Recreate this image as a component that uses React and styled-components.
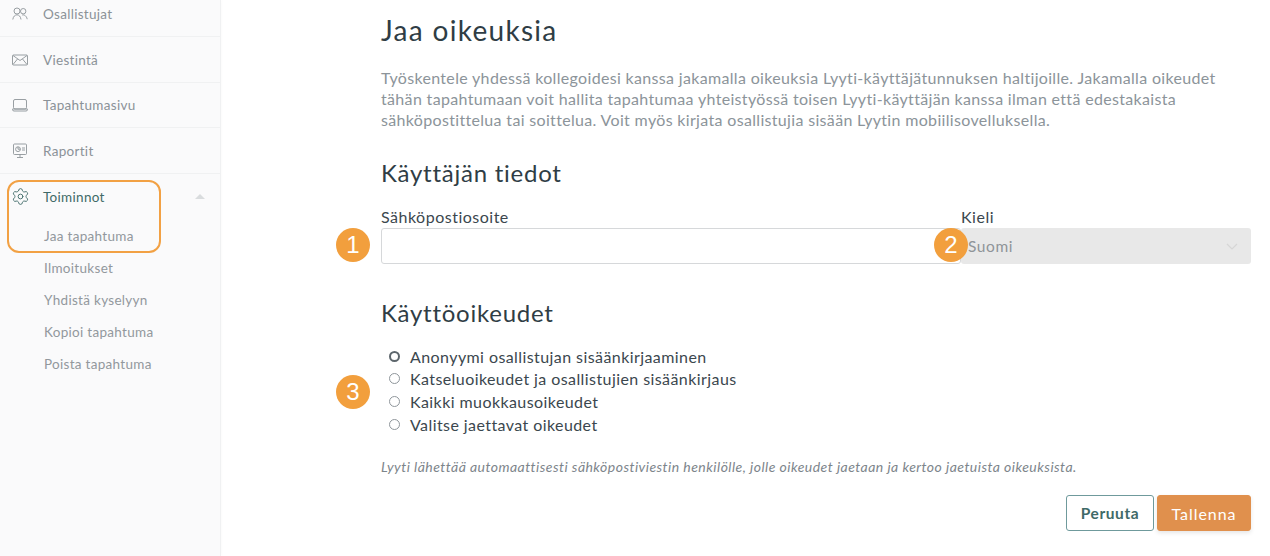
import React from 'react';
import styled, { createGlobalStyle } from 'styled-components';
import { Settings } from 'lucide-react';

const GlobalStyle = createGlobalStyle`
  html, body {
    margin: 0;
    padding: 0;
    height: 100%;
    background: #fff;
    overflow: hidden;
  }
  body {
    font-family: Lato, "Open Sans", sans-serif;
    color: #2f3d45;
  }
`;

const Page = styled.div`
  display: flex;
  width: 1270px;
  height: 556px;
  overflow: hidden;
`;

const Sidebar = styled.aside`
  position: relative;
  box-sizing: border-box;
  width: 221px;
  flex: none;
  background: #fafafb;
  border-right: 1px solid #f0f1f2;
  box-shadow: 1px 0 3px rgba(0, 0, 0, 0.02);
`;

const NavRow = styled.div`
  display: flex;
  align-items: center;
  box-sizing: border-box;
  height: ${(p) => p.$height}px;
  padding-left: 12px;
  padding-bottom: ${(p) => p.$bottom || 0}px;
  border-bottom: 1px solid ${(p) => (p.$open ? 'transparent' : '#f0f1f2')};
  color: ${(p) => (p.$open ? '#3f6a68' : '#8b9298')};
  font-size: 13.5px;
  letter-spacing: 0.3px;
`;

const IconSlot = styled.span`
  display: flex;
  align-items: center;
  justify-content: center;
  width: 16px;
  height: 16px;
  margin-right: 15px;
  color: ${(p) => (p.$open ? '#47706e' : '#8d9499')};

  svg {
    flex: none;
  }
`;

const Caret = styled.span`
  width: 0;
  height: 0;
  margin-left: auto;
  margin-right: 15px;
  border-left: 5px solid transparent;
  border-right: 5px solid transparent;
  border-bottom: 5px solid #d9dcde;
`;

const SubList = styled.div`
  display: flex;
  flex-direction: column;
`;

const SubItem = styled.div`
  height: 32px;
  line-height: 32px;
  padding-left: 44px;
  color: #92989d;
  font-size: 13.5px;
  letter-spacing: 0.3px;
`;

const Highlight = styled.div`
  position: absolute;
  left: 7px;
  top: 180px;
  width: 154px;
  height: 73px;
  box-sizing: border-box;
  border: 2px solid #f2a144;
  border-radius: 12px;
`;

const Main = styled.main`
  flex: 1;
  padding: 12px 19px 0 160px;
`;

const Title = styled.h1`
  margin: 0;
  font-size: 28px;
  line-height: 36px;
  font-weight: 400;
  letter-spacing: 1.3px;
  color: #2f3d45;
`;

const Intro = styled.p`
  margin: 19px 0 0;
  font-size: 16px;
  line-height: 21px;
  letter-spacing: 0.33px;
  color: #8c949a;
`;

const Heading = styled.h2`
  margin: ${(p) => p.$top}px 0 0;
  font-size: 24px;
  line-height: 32px;
  font-weight: 400;
  letter-spacing: 0.75px;
  color: #2f3d45;
`;

const FormRow = styled.div`
  position: relative;
  display: grid;
  grid-template-columns: 580px 290px;
  margin-top: 17px;
`;

const Field = styled.div`
  display: flex;
  flex-direction: column;
`;

const Label = styled.label`
  font-size: 16px;
  line-height: 22px;
  letter-spacing: 0.5px;
  color: #3b474e;
`;

const TextInput = styled.input`
  box-sizing: border-box;
  height: 36px;
  border: 1px solid #d6d8da;
  border-radius: 3px;
  background: #fff;
  outline: none;
`;

const SelectBox = styled.div`
  display: flex;
  align-items: center;
  justify-content: space-between;
  box-sizing: border-box;
  height: 36px;
  padding: 0 13px 0 7px;
  border-radius: 3px;
  background: #e8e8e8;
  color: #8f9498;
  font-size: 15.5px;
  letter-spacing: 0.6px;
`;

const Badge = styled.span`
  position: absolute;
  left: ${(p) => p.$left}px;
  top: ${(p) => p.$top}px;
  display: flex;
  align-items: center;
  justify-content: center;
  width: 34px;
  height: 34px;
  border-radius: 50%;
  background: #f29f3d;
  color: #fff;
  font-family: "Liberation Sans", Arial, sans-serif;
  font-size: 24px;
`;

const RadioGroup = styled.div`
  position: relative;
  display: flex;
  flex-direction: column;
  margin-top: 16px;
`;

const RadioRow = styled.div`
  display: flex;
  align-items: center;
  height: 22.6px;
  padding-left: 8px;
  font-size: 16px;
  letter-spacing: 0.42px;
  color: #3b474e;
`;

const RadioDot = styled.span`
  box-sizing: border-box;
  width: 11px;
  height: 11px;
  margin-right: 10px;
  border-radius: 50%;
  border: ${(p) => (p.$checked ? '2px solid #5d666c' : '1px solid #8f969b')};
`;

const Note = styled.p`
  margin: 23px 0 0;
  font-size: 14px;
  line-height: 18px;
  font-style: italic;
  letter-spacing: 0.46px;
  color: #7d858b;
`;

const Actions = styled.div`
  display: flex;
  justify-content: flex-end;
  gap: 3px;
  margin-top: 19px;
`;

const Button = styled.button`
  box-sizing: border-box;
  width: ${(p) => (p.$primary ? 94 : 88)}px;
  height: 36px;
  padding: 0;
  border-radius: 3px;
  border: 1px solid ${(p) => (p.$primary ? '#e0904d' : '#6f9a9c')};
  background: ${(p) => (p.$primary ? '#e0904d' : '#fff')};
  color: ${(p) => (p.$primary ? '#fff' : '#3f6a68')};
  box-shadow: ${(p) => (p.$primary ? '0 2px 4px rgba(0,0,0,0.1)' : 'none')};
  font-family: inherit;
  font-size: ${(p) => (p.$primary ? 16 : 15.5)}px;
  font-weight: ${(p) => (p.$primary ? 400 : 700)};
  letter-spacing: ${(p) => (p.$primary ? 0.95 : 0.6)}px;
`;

const Svg = ({ children }) => (
  <svg width="16" height="16" viewBox="0 0 16 16" fill="none" stroke="currentColor" strokeWidth="0.9">
    {children}
  </svg>
);

const UsersIcon = () => (
  <Svg>
    <circle cx="5" cy="5" r="3" />
    <path d="M0.8 13.5 C1.2 10.5 3 8.8 5 8.8 C7 8.8 8.6 10.5 9 13.5" />
    <circle cx="11.2" cy="5.2" r="2.7" />
    <path d="M10.2 9 C12.5 8.4 14.6 10.2 15.2 13.2" />
  </Svg>
);

const MailIcon = () => (
  <Svg>
    <rect x="0.5" y="3" width="15" height="10" rx="1" />
    <path d="M1 3.5 L8 8.5 L15 3.5 M1 12.5 L5.5 7 M15 12.5 L10.5 7" />
  </Svg>
);

const LaptopIcon = () => (
  <Svg>
    <rect x="1.5" y="2.5" width="13" height="9.5" rx="1.5" />
    <path d="M0.5 12 H15.5 V12.5 Q15.5 14 14 14 H2 Q0.5 14 0.5 12.5 Z" />
  </Svg>
);

const ReportIcon = () => (
  <Svg>
    <rect x="1.5" y="1" width="13" height="10.5" rx="1" />
    <circle cx="6" cy="6.2" r="2.4" />
    <path d="M6 3.8 V6.2 H8.4 M10 5 H13 M10 7 H13 M8 11.5 V14 M5 14.5 H11" />
  </Svg>
);

const navItems = [
  { label: 'Osallistujat', icon: <UsersIcon />, height: 37, bottom: 9 },
  { label: 'Viestintä', icon: <MailIcon />, height: 46 },
  { label: 'Tapahtumasivu', icon: <LaptopIcon />, height: 45 },
  { label: 'Raportit', icon: <ReportIcon />, height: 46 },
];

const subItems = ['Jaa tapahtuma', 'Ilmoitukset', 'Yhdistä kyselyyn', 'Kopioi tapahtuma', 'Poista tapahtuma'];

const radios = [
  'Anonyymi osallistujan sisäänkirjaaminen',
  'Katseluoikeudet ja osallistujien sisäänkirjaus',
  'Kaikki muokkausoikeudet',
  'Valitse jaettavat oikeudet',
];

export default function App() {
  return (
    <Page>
      <GlobalStyle />
      <Sidebar>
        {navItems.map((item) => (
          <NavRow key={item.label} $height={item.height} $bottom={item.bottom}>
            <IconSlot>{item.icon}</IconSlot>
            {item.label}
          </NavRow>
        ))}
        <NavRow $open $height={46}>
          <IconSlot $open>
            <Settings size={19} strokeWidth={1.2} />
          </IconSlot>
          Toiminnot
          <Caret />
        </NavRow>
        <SubList>
          {subItems.map((label) => (
            <SubItem key={label}>{label}</SubItem>
          ))}
        </SubList>
        <Highlight />
      </Sidebar>
      <Main>
        <Title>Jaa oikeuksia</Title>
        <Intro>
          Työskentele yhdessä kollegoidesi kanssa jakamalla oikeuksia Lyyti-käyttäjätunnuksen haltijoille. Jakamalla oikeudet
          <br />
          tähän tapahtumaan voit hallita tapahtumaa yhteistyössä toisen Lyyti-käyttäjän kanssa ilman että edestakaista
          <br />
          sähköpostittelua tai soittelua. Voit myös kirjata osallistujia sisään Lyytin mobiilisovelluksella.
        </Intro>
        <Heading $top={27}>Käyttäjän tiedot</Heading>
        <FormRow>
          <Field>
            <Label>Sähköpostiosoite</Label>
            <TextInput />
          </Field>
          <Field>
            <Label>Kieli</Label>
            <SelectBox>
              Suomi
              <svg width="12" height="7" viewBox="0 0 12 7" fill="none" stroke="#d6d6d6" strokeWidth="1.2">
                <path d="M1 1 L6 6 L11 1" />
              </svg>
            </SelectBox>
          </Field>
          <Badge $left={-45} $top={22}>1</Badge>
          <Badge $left={553} $top={22}>2</Badge>
        </FormRow>
        <Heading $top={33}>Käyttöoikeudet</Heading>
        <RadioGroup>
          {radios.map((label, i) => (
            <RadioRow key={label}>
              <RadioDot $checked={i === 0} />
              {label}
            </RadioRow>
          ))}
          <Badge $left={-45} $top={30}>3</Badge>
        </RadioGroup>
        <Note>Lyyti lähettää automaattisesti sähköpostiviestin henkilölle, jolle oikeudet jaetaan ja kertoo jaetuista oikeuksista.</Note>
        <Actions>
          <Button>Peruuta</Button>
          <Button $primary>Tallenna</Button>
        </Actions>
      </Main>
    </Page>
  );
}
